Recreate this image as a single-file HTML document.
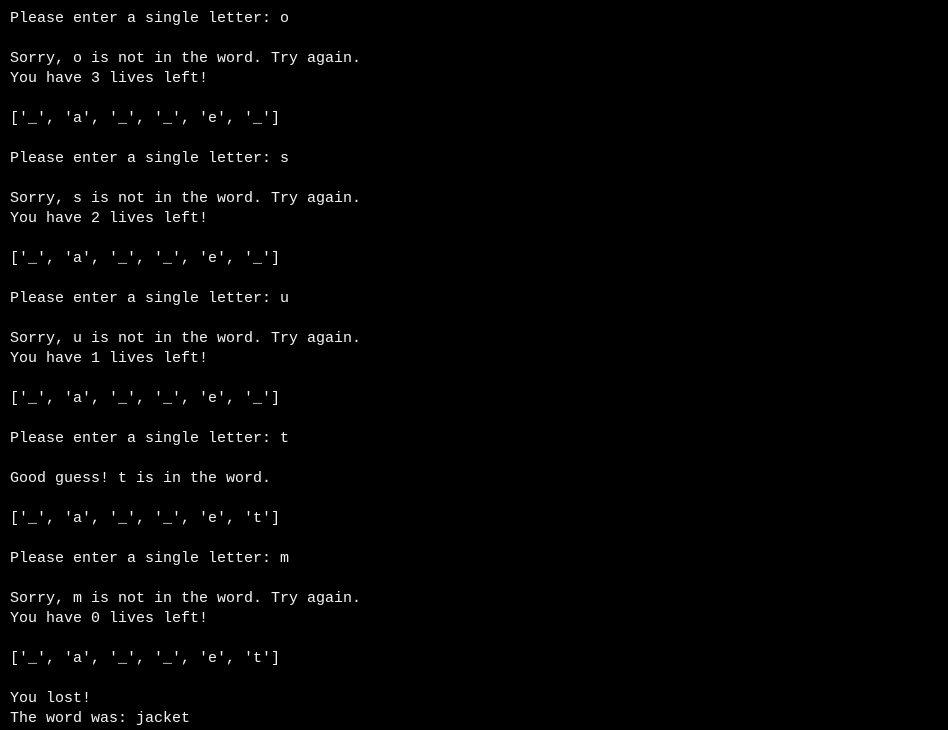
<!DOCTYPE html>
<html><head><style>
html,body{margin:0;padding:0;background:#000;width:948px;height:730px;overflow:hidden}
pre{margin:0;padding:9px 0 0 10px;font-family:"Liberation Mono",monospace;font-size:15px;line-height:20px;color:#f2f2f2}
</style></head><body><pre>Please enter a single letter: o

Sorry, o is not in the word. Try again.
You have 3 lives left!

['_', 'a', '_', '_', 'e', '_']

Please enter a single letter: s

Sorry, s is not in the word. Try again.
You have 2 lives left!

['_', 'a', '_', '_', 'e', '_']

Please enter a single letter: u

Sorry, u is not in the word. Try again.
You have 1 lives left!

['_', 'a', '_', '_', 'e', '_']

Please enter a single letter: t

Good guess! t is in the word.

['_', 'a', '_', '_', 'e', 't']

Please enter a single letter: m

Sorry, m is not in the word. Try again.
You have 0 lives left!

['_', 'a', '_', '_', 'e', 't']

You lost!
The word was: jacket</pre></body></html>
